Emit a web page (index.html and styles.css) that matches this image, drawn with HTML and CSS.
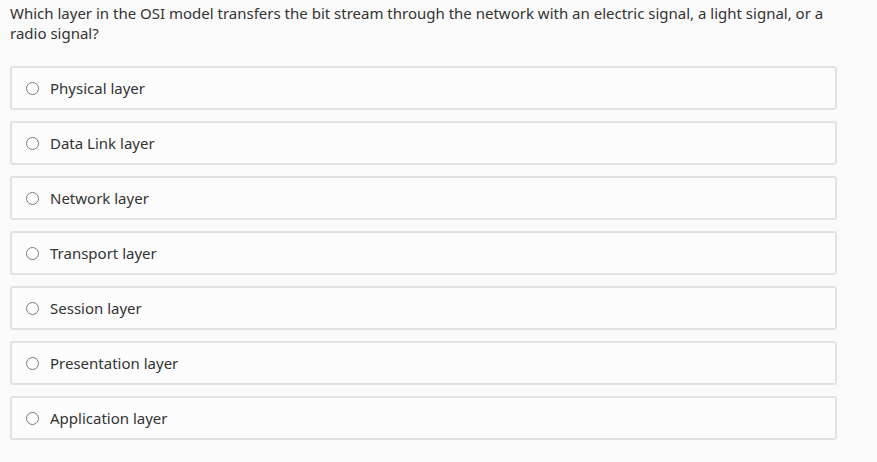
FILE: index.html
```html
<!DOCTYPE html>
<html>
<head>
<meta charset="utf-8">
<link rel="stylesheet" href="styles.css">
</head>
<body>
<div class="page">
  <div class="question">Which layer in the OSI model transfers the bit stream through the network with an electric signal, a light signal, or a radio signal?</div>
  <div class="options">
    <label class="option"><span class="radio"></span><span class="label">Physical layer</span></label>
    <label class="option"><span class="radio"></span><span class="label">Data Link layer</span></label>
    <label class="option"><span class="radio"></span><span class="label">Network layer</span></label>
    <label class="option"><span class="radio"></span><span class="label">Transport layer</span></label>
    <label class="option"><span class="radio"></span><span class="label">Session layer</span></label>
    <label class="option"><span class="radio"></span><span class="label">Presentation layer</span></label>
    <label class="option"><span class="radio"></span><span class="label">Application layer</span></label>
  </div>
</div>
</body>
</html>
```
FILE: styles.css
```css
html, body {
  margin: 0;
  padding: 0;
  background: #fafafa;
}
body {
  font-family: "Noto Sans", "Open Sans", sans-serif;
  color: #333;
  height: 462px;
  overflow: hidden;
}
.page {
  padding: 3px 0 0 10px;
  width: 827px;
}
.question {
  font-size: 15px;
  line-height: 20px;
  width: 830px;
  color: #333;
}
.options {
  display: flex;
  flex-direction: column;
  gap: 11px;
  margin-top: 23px;
}
.option {
  display: flex;
  align-items: center;
  height: 40px;
  border: 2px solid #e2e2e2;
  border-radius: 3px;
  background: #fcfcfc;
  padding-left: 14px;
}
.radio {
  width: 11px;
  height: 11px;
  border: 1px solid #7a7a7a;
  border-radius: 50%;
  background: #fff;
  flex: none;
  margin-top: 1px;
}
.label {
  margin-left: 11px;
  font-size: 15px;
  color: #333;
}
```
